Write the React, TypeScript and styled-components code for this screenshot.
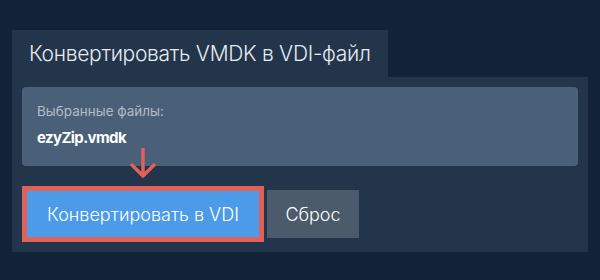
import { createGlobalStyle, styled } from 'styled-components';

const GlobalStyle = createGlobalStyle`
  html, body {
    margin: 0;
    padding: 0;
    background-color: #112239;
    font-family: Inter, 'Noto Sans', 'Liberation Sans', sans-serif;
  }
`;

const App = () => {
  return (
    <>
      <GlobalStyle />
      <Page>
        <Tab>Конвертировать VMDK в VDI-файл</Tab>
        <Panel>
          <FilesBox>
            <FilesLabel>Выбранные файлы:</FilesLabel>
            <FileName>ezyZip.vmdk</FileName>
          </FilesBox>
          <Arrow width='28' height='30' viewBox='0 0 28 30'>
            <path
              d='M14 0 V27 M2 16 L14 28 L26 16'
              fill='none'
              stroke='#e0605a'
              strokeWidth='3.5'
              strokeLinejoin='round'
            />
          </Arrow>
          <ButtonRow>
            <ConvertButton>Конвертировать в VDI</ConvertButton>
            <ResetButton>Сброс</ResetButton>
          </ButtonRow>
        </Panel>
      </Page>
    </>
  );
};

export default App;

const Page = styled.div`
  display: flex;
  flex-direction: column;
  align-items: flex-start;

  padding: 30px 12px 0;
`;

const Tab = styled.div`
  display: flex;
  align-items: center;

  height: 47px;
  padding: 0 17px;

  background-color: #22354b;
  color: #e6ebf0;

  font-size: 21px;
  font-weight: 300;
  letter-spacing: -0.3px;
`;

const Panel = styled.div`
  position: relative;
  display: flex;
  flex-direction: column;
  gap: 20px;

  width: 100%;
  padding: 10px;

  background-color: #22354b;

  box-sizing: border-box;
`;

const FilesBox = styled.div`
  display: flex;
  flex-direction: column;
  gap: 9px;

  height: 79px;
  padding: 16px 15px 0;

  border-radius: 4px;
  background-color: #4a5f78;

  box-sizing: border-box;
`;

const FilesLabel = styled.div`
  font-size: 13.5px;
  color: #b2bdc9;
`;

const FileName = styled.div`
  font-size: 15px;
  font-weight: 700;
  color: #ffffff;
  letter-spacing: -0.6px;
`;

const Arrow = styled.svg`
  position: absolute;
  left: 117px;
  top: 71px;
`;

const ButtonRow = styled.div`
  display: flex;
  align-items: center;
  gap: 3px;
`;

const ConvertButton = styled.button`
  width: 242px;
  height: 56px;

  border: 5px solid #e0605a;
  background-color: #4c9be8;
  color: #ffffff;

  font-family: inherit;
  font-size: 18px;
  font-weight: 300;

  box-sizing: border-box;
  cursor: pointer;
`;

const ResetButton = styled.button`
  width: 92px;
  height: 48px;

  border: none;
  background-color: #4b5b6c;
  color: #ffffff;

  font-family: inherit;
  font-size: 18px;
  font-weight: 300;

  cursor: pointer;
`;
